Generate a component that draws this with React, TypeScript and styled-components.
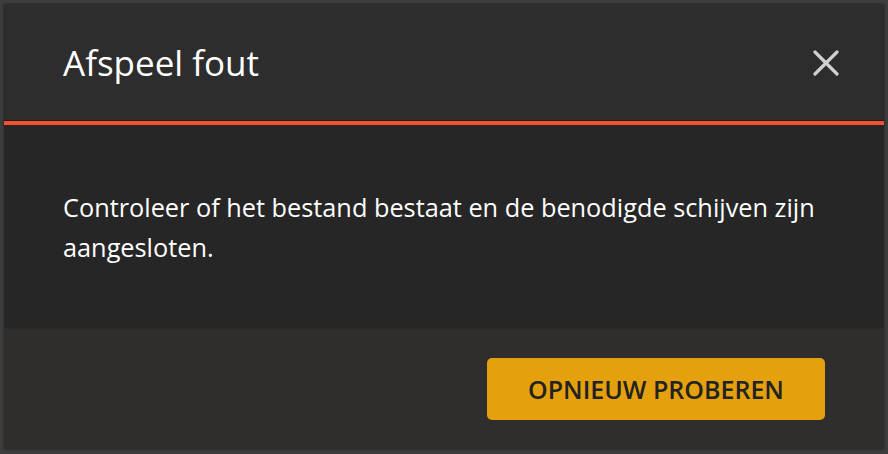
import styled, { createGlobalStyle } from "styled-components";

const GlobalStyle = createGlobalStyle`
  html, body {
    margin: 0;
    padding: 0;
    background: #3d3d3d;
  }
  body {
    font-family: "Open Sans", "Liberation Sans", sans-serif;
  }
`;

const Frame = styled.div`
  box-sizing: border-box;
  width: 888px;
  height: 454px;
  padding: 4px 4px 5px 4px;
  display: flex;
`;

const Modal = styled.div`
  flex: 1;
  display: flex;
  flex-direction: column;
  background: #262626;
  box-shadow: 0 0 2px rgba(0, 0, 0, 0.5);
`;

const ModalHeader = styled.div`
  box-sizing: border-box;
  height: 121px;
  display: flex;
  align-items: center;
  justify-content: space-between;
  padding: 0 40px 0 59px;
  background: #2d2d2d;
  border-bottom: 4px solid #f4522f;
  box-shadow: 0 1px 1px #1c2022, inset 0 -1px 0 #1c2022;
`;

const Title = styled.h1`
  margin: 0;
  font-size: 35px;
  font-weight: 400;
  color: #ffffff;
`;

const CloseButton = styled.button`
  width: 36px;
  height: 36px;
  padding: 0;
  border: 0;
  background: transparent;
  display: flex;
  align-items: center;
  justify-content: center;
  cursor: pointer;
`;

const ModalBody = styled.div`
  flex: 1;
  display: flex;
  align-items: center;
  padding: 0 30px 0 59px;
  background: #262626;
`;

const Message = styled.p`
  margin: 0;
  font-size: 25.3px;
  line-height: 40px;
  color: #ffffff;
`;

const ModalFooter = styled.div`
  box-sizing: border-box;
  height: 121px;
  display: flex;
  align-items: center;
  justify-content: flex-end;
  padding: 0 59px 0 0;
  background: #2f2e2d;
  border-top: 1px solid #2a2a2a;
`;

const PrimaryButton = styled.button`
  width: 338px;
  height: 62px;
  border: 0;
  border-radius: 5px;
  background: #e5a00d;
  color: #222222;
  font-family: "Open Sans", "Liberation Sans", sans-serif;
  font-size: 25px;
  font-weight: 600;
  text-transform: uppercase;
  cursor: pointer;
`;

export default function App() {
  return (
    <>
      <GlobalStyle />
      <Frame>
        <Modal>
          <ModalHeader>
            <Title>Afspeel fout</Title>
            <CloseButton aria-label="Sluiten">
              <svg width="26" height="26" viewBox="0 0 26 26">
                <path
                  d="M2 2 L24 24 M24 2 L2 24"
                  stroke="#d0d0d0"
                  strokeWidth="3.2"
                  strokeLinecap="round"
                />
              </svg>
            </CloseButton>
          </ModalHeader>
          <ModalBody>
            <Message>
              Controleer of het bestand bestaat en de benodigde schijven zijn
              aangesloten.
            </Message>
          </ModalBody>
          <ModalFooter>
            <PrimaryButton>Opnieuw proberen</PrimaryButton>
          </ModalFooter>
        </Modal>
      </Frame>
    </>
  );
}
